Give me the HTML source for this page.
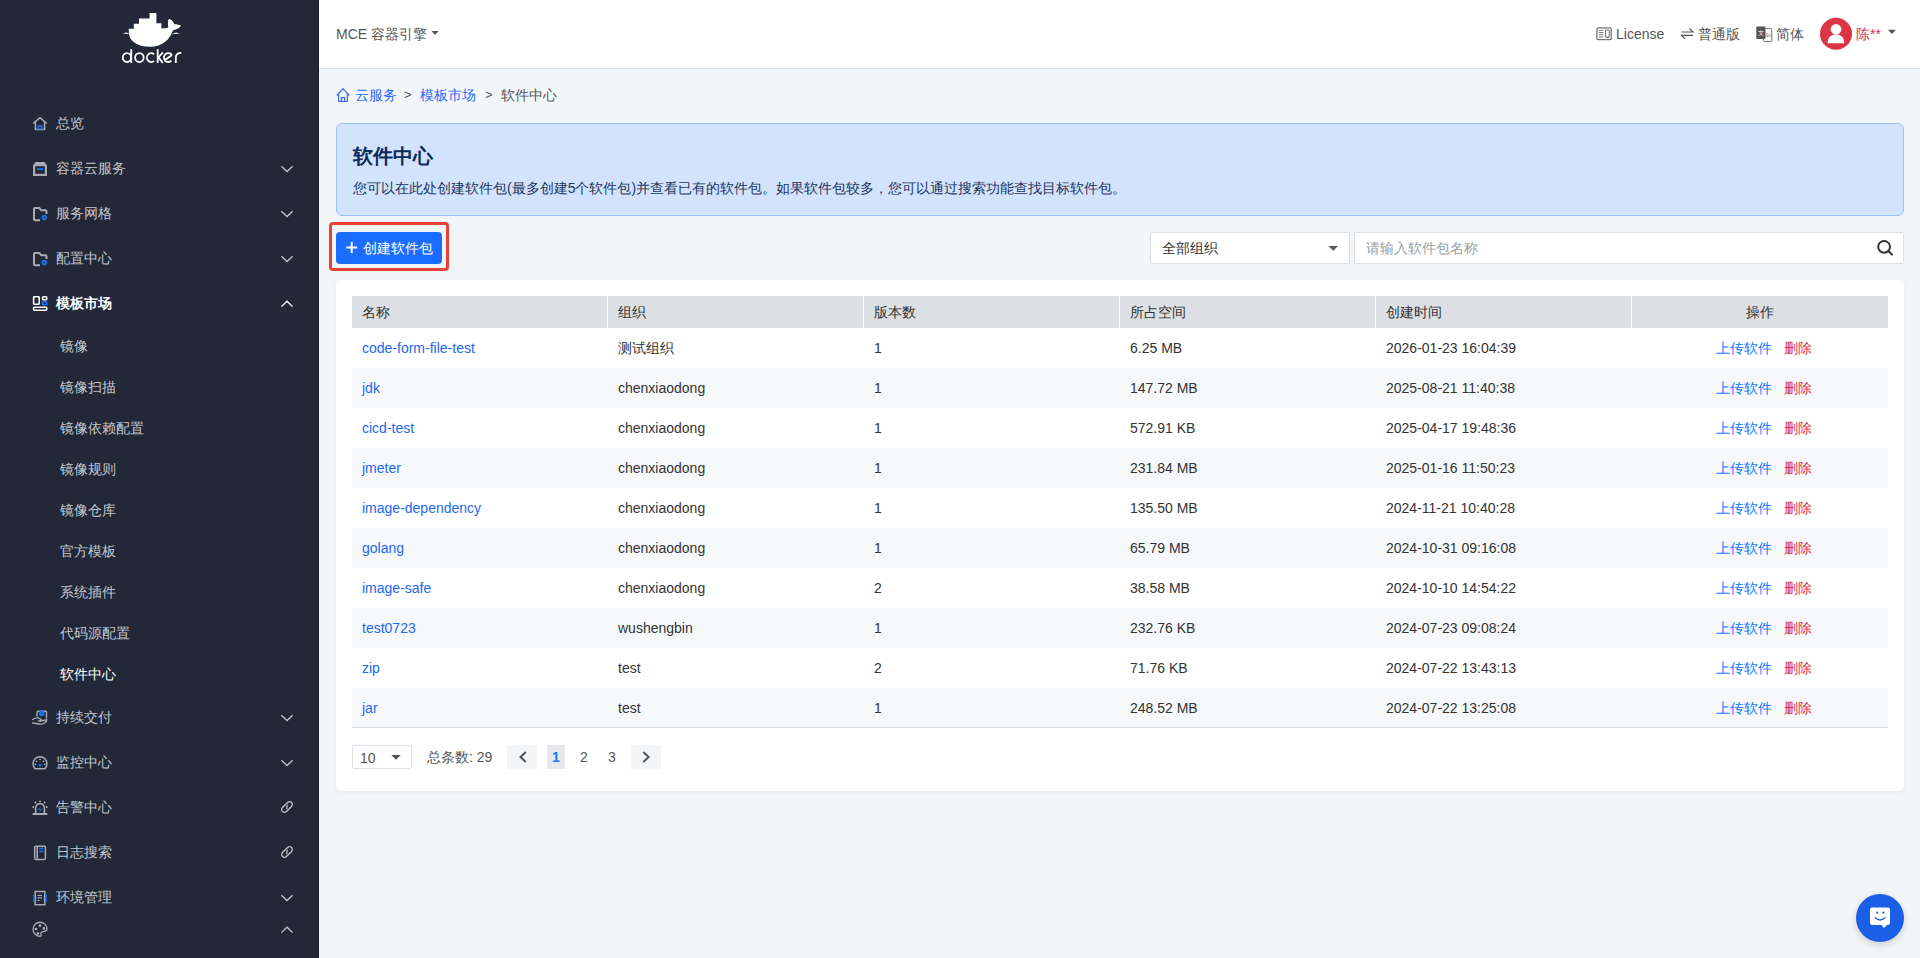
<!DOCTYPE html>
<html><head><meta charset="utf-8">
<style>
*{box-sizing:border-box;margin:0;padding:0}
html,body{width:1920px;height:958px;overflow:hidden;font-family:"Liberation Sans",sans-serif;font-size:14px;color:#333;background:#f3f6f9;position:relative}
.abs{position:absolute}
.side{position:absolute;left:0;top:0;width:319px;height:958px;background:#222837;border-right:1px solid #181c29}
.sv{position:absolute;left:0;top:0}
.t{position:absolute;height:20px;line-height:20px;color:#c3c6cd;white-space:nowrap}
.t.act{color:#fff;font-weight:bold}
.t.sact{color:#fff;font-weight:500}
.hdr{position:absolute;left:319px;top:0;width:1601px;height:69px;background:#fff;border-bottom:1px solid #dde1e6}
.ht{position:absolute;top:24px;height:20px;line-height:20px;color:#555;white-space:nowrap}
.bc{position:absolute;top:85px;height:20px;line-height:20px;white-space:nowrap}
.info{position:absolute;left:336px;top:123px;width:1568px;height:93px;background:#d2e3fd;border:1px solid #9cc3fa;border-radius:6px}
.redbox{position:absolute;left:329px;top:222px;width:120px;height:49px;border:3px solid #ec4137;border-radius:4px}
.btn{position:absolute;left:336px;top:232px;width:106px;height:32px;background:#1a6dff;border-radius:4px;color:#fff}
.sel{position:absolute;left:1150px;top:232px;width:200px;height:32px;background:#fff;border:1px solid #dcdfe6;border-radius:2px}
.srch{position:absolute;left:1354px;top:232px;width:550px;height:32px;background:#fff;border:1px solid #dcdfe6;border-radius:2px}
.card{position:absolute;left:336px;top:280px;width:1568px;height:511px;background:#fff;border-radius:6px;box-shadow:0 1px 4px rgba(0,20,60,.06)}
table{position:absolute;left:16px;top:16px;width:1536px;border-collapse:separate;border-spacing:0;table-layout:fixed}
th{height:32px;background:#dcdfe3;font-weight:normal;text-align:left;padding:0 10px;color:#333;border-right:1px solid #fff;line-height:20px}
th:last-child{border-right:0;text-align:center}
td{height:40px;padding:0 10px;color:#333;line-height:20px;white-space:nowrap}
tr.alt td{background:#f6f8fa}
td a{color:#2468f2;text-decoration:none}
td.op{padding-left:84px}
.up{color:#1677ff}
.del{color:#dc2f45;margin-left:12px}
tbody tr:last-child td{border-bottom:1px solid #dcdfe3}
.pg{position:absolute;height:20px;line-height:20px;white-space:nowrap;color:#555}
</style></head><body>
<div class="side">
<div class="t" style="left:56px;top:113px">总览</div>
<div class="t" style="left:56px;top:158px">容器云服务</div>
<div class="t" style="left:56px;top:203px">服务网格</div>
<div class="t" style="left:56px;top:248px">配置中心</div>
<div class="t act" style="left:56px;top:293px">模板市场</div>
<div class="t" style="left:56px;top:707px">持续交付</div>
<div class="t" style="left:56px;top:752px">监控中心</div>
<div class="t" style="left:56px;top:797px">告警中心</div>
<div class="t" style="left:56px;top:842px">日志搜索</div>
<div class="t" style="left:56px;top:887px">环境管理</div>
<div class="t" style="left:60px;top:336px">镜像</div>
<div class="t" style="left:60px;top:377px">镜像扫描</div>
<div class="t" style="left:60px;top:418px">镜像依赖配置</div>
<div class="t" style="left:60px;top:459px">镜像规则</div>
<div class="t" style="left:60px;top:500px">镜像仓库</div>
<div class="t" style="left:60px;top:541px">官方模板</div>
<div class="t" style="left:60px;top:582px">系统插件</div>
<div class="t" style="left:60px;top:623px">代码源配置</div>
<div class="t sact" style="left:60px;top:664px">软件中心</div>
<svg class="sv" width="319" height="958" viewBox="0 0 319 958">
<polyline points="281.4,166.25 287,171.5 292.6,166.25" fill="none" stroke="#c3c6cd" stroke-width="1.3"/>
<polyline points="281.4,211.25 287,216.5 292.6,211.25" fill="none" stroke="#c3c6cd" stroke-width="1.3"/>
<polyline points="281.4,256.25 287,261.5 292.6,256.25" fill="none" stroke="#c3c6cd" stroke-width="1.3"/>
<polyline points="281.4,306.6 287,301.25 292.6,306.6" fill="none" stroke="#ffffff" stroke-width="1.3"/>
<polyline points="281.4,715.25 287,720.5 292.6,715.25" fill="none" stroke="#c3c6cd" stroke-width="1.3"/>
<polyline points="281.4,760.25 287,765.5 292.6,760.25" fill="none" stroke="#c3c6cd" stroke-width="1.3"/>
<g transform="translate(287,807) rotate(-45)" fill="none" stroke="#b9bcc3" stroke-width="1.3" stroke-linecap="round"><path d="M-2.2,-2.8 H3.6 A2.8,2.8 0 0 1 3.6,2.8 H1.6"/><path d="M2.2,2.8 H-3.6 A2.8,2.8 0 0 1 -3.6,-2.8 H-1.6"/><path d="M-1.4,1.1 L1.4,-1.1"/></g>
<g transform="translate(287,852) rotate(-45)" fill="none" stroke="#b9bcc3" stroke-width="1.3" stroke-linecap="round"><path d="M-2.2,-2.8 H3.6 A2.8,2.8 0 0 1 3.6,2.8 H1.6"/><path d="M2.2,2.8 H-3.6 A2.8,2.8 0 0 1 -3.6,-2.8 H-1.6"/><path d="M-1.4,1.1 L1.4,-1.1"/></g>
<polyline points="281.4,895.25 287,900.5 292.6,895.25" fill="none" stroke="#c3c6cd" stroke-width="1.3"/>
<polyline points="281.4,932.6 287,927.25 292.6,932.6" fill="none" stroke="#c3c6cd" stroke-width="1.3"/>
</svg>

<svg class="sv" width="319" height="958" viewBox="0 0 319 958">
<!-- docker logo -->
<g fill="#fff">
<path d="M149.6,13 H156.4 V23.3 H161.4 V28.6 Q165,28.6 168.3,27.6 C168,25 167.9,22 168.2,20.2 Q168.8,18.2 170.6,19.4 C172.6,20.8 173.8,22.5 174.3,24.3 C176.5,24.2 179.2,24.8 181,25.6 C179.8,28 176.5,29.6 173,30.2 C170.5,38.5 162.5,46.8 150,46.8 C136.5,46.8 128.8,40.5 128.8,32 V28.8 H133.8 V23.8 H139 V18.5 H149.6 Z"/>
<path d="M122.5,33.6 L126,32.4 L128.8,33.2 L128.8,34.1 Z M172,34.1 L176,32.6 L180,33.6 L172,34.2 Z"/>
</g>
<g fill="none" stroke="#fff" stroke-width="1.8">
<ellipse cx="127" cy="57.6" rx="4.2" ry="4.45"/><line x1="131.25" y1="49.2" x2="131.25" y2="62.9"/>
<ellipse cx="139.4" cy="57.6" rx="4.3" ry="4.45"/>
<path d="M154.1,54.3 A4.3,4.45 0 1 0 154.1,60.9"/>
<line x1="157.7" y1="49.2" x2="157.7" y2="62.9"/><path d="M162.9,52.4 L158.4,57.4 L162.9,62.8"/>
<path d="M171.9,55.2 A4.3,4.45 0 1 0 171.4,60.6 M164.6,60.3 L172,54.9"/>
<path d="M175.8,62.9 V57.6 Q175.8,52.9 181.3,52.9"/>
</g>
<!-- home -->
<g fill="none" stroke="#a7abb3" stroke-width="1.5" stroke-linejoin="round">
<polyline points="33.2,123.5 40,117.6 46.8,123.5"/>
<path d="M35.4,122 V129.6 H44.6 V122"/>
</g>
<path d="M38.3,130 V126 H41.7 V130" fill="none" stroke="#1677ff" stroke-width="1.5"/>
<!-- box -->
<path d="M33,165.5 L35.5,162 H44.5 L47,165.5 V176 H33 Z" fill="#a7abb3"/>
<rect x="35.2" y="166.2" width="9.6" height="7.6" fill="#222837"/>
<rect x="37" y="168.2" width="6" height="1.8" fill="#1677ff"/>
<!-- folder x2 -->
<g>
<path d="M40,220.2 H35 Q34,220.2 34,219.2 V209 Q34,208 35,208 H39.3 L41.3,210.3 H45.5 Q46.5,210.3 46.5,211.3 V214" fill="none" stroke="#a7abb3" stroke-width="2" stroke-linejoin="round"/>
<polygon points="47.50,217.60 46.47,218.85 45.90,220.37 44.30,220.10 42.70,220.37 42.13,218.85 41.10,217.60 42.13,216.35 42.70,214.83 44.30,215.10 45.90,214.83 46.47,216.35" fill="#1677ff"/><ellipse cx="44.3" cy="217.6" rx="1.1" ry="0.8" fill="#222837"/>
</g>
<g transform="translate(0,45)">
<path d="M40,220.2 H35 Q34,220.2 34,219.2 V209 Q34,208 35,208 H39.3 L41.3,210.3 H45.5 Q46.5,210.3 46.5,211.3 V214" fill="none" stroke="#a7abb3" stroke-width="2" stroke-linejoin="round"/>
<polygon points="47.50,217.60 46.47,218.85 45.90,220.37 44.30,220.10 42.70,220.37 42.13,218.85 41.10,217.60 42.13,216.35 42.70,214.83 44.30,215.10 45.90,214.83 46.47,216.35" fill="#1677ff"/><ellipse cx="44.3" cy="217.6" rx="1.1" ry="0.8" fill="#222837"/>
</g>

<!-- template market (white active) -->
<g fill="none" stroke-width="1.6">
<rect x="33.6" y="296.8" width="5.6" height="7.4" rx="0.6" stroke="#fff"/>
<rect x="42.6" y="296.8" width="4.1" height="3" rx="0.8" stroke="#fff"/>
<rect x="42.3" y="301.8" width="4.6" height="3" rx="1" stroke="#1677ff"/>
<rect x="33.6" y="307.3" width="13.1" height="2.9" rx="0.6" stroke="#fff"/>
</g>
<!-- delivery (hand+box) -->
<g fill="none" stroke="#a7abb3" stroke-width="1.4" stroke-linecap="round" stroke-linejoin="round">
<path d="M37,716 V712.5 Q37,711.2 38.3,711.2 H45.5 Q46.5,711.2 46.5,712.2 V718"/>
<path d="M32.8,719.5 Q35,717.5 38.5,718 L41,719.3 Q42,720.6 40.5,721 H38.5"/>
<path d="M40.5,721 L44.5,720.2 L46.8,719.8 Q47,721.5 44.5,723 Q42,724.5 39,724 L32.8,723"/>
</g>
<rect x="39.2" y="711" width="5" height="5" rx="1.2" fill="#1677ff"/>
<rect x="41" y="712.8" width="1.4" height="1" fill="#222837"/>
<!-- gauge -->
<path d="M35,768.7 C33.6,767.4 33.1,765.6 33.1,763.6 A6.9,6.9 0 0 1 46.9,763.6 C46.9,765.6 46.4,767.4 45,768.7 Z" fill="none" stroke="#a7abb3" stroke-width="1.5" stroke-linejoin="round"/>
<g fill="#b4b7be"><circle cx="35.4" cy="764.3" r="0.8"/><circle cx="36.5" cy="761.3" r="0.8"/><circle cx="40" cy="759.5" r="0.8"/><circle cx="43.5" cy="761.3" r="0.8"/><circle cx="44.6" cy="764.3" r="0.8"/></g>
<rect x="38.8" y="763.9" width="2.4" height="2.4" rx="0.5" fill="#1677ff"/>
<!-- alarm -->
<path d="M35.6,813.2 V808 A4.4,4.4 0 0 1 44.4,808 V813.2" fill="none" stroke="#a7abb3" stroke-width="1.6"/>
<rect x="32.6" y="813" width="14.8" height="2.1" rx="0.6" fill="#a7abb3"/>
<g fill="#b4b7be"><circle cx="35.5" cy="802.5" r="0.9"/><circle cx="40" cy="801.3" r="0.9"/><circle cx="44.5" cy="802.5" r="0.9"/><circle cx="33.3" cy="807" r="0.9"/><circle cx="46.7" cy="807" r="0.9"/></g>
<path d="M40.8,806.8 L38.2,809.8 H40.3 L39.3,812.3 L42,809.2 H39.9 Z" fill="#1677ff"/>
<!-- book -->
<rect x="34.7" y="846.2" width="10.7" height="13.3" rx="1" fill="none" stroke="#a7abb3" stroke-width="1.5"/>
<rect x="35.4" y="847" width="1.6" height="11.8" fill="#5d6270"/>
<line x1="37.4" y1="846.2" x2="37.4" y2="859.5" stroke="#a7abb3" stroke-width="1.2"/>
<rect x="39.3" y="847.8" width="3.8" height="1.6" fill="#1677ff"/>
<rect x="39.3" y="850.8" width="4.2" height="1.4" fill="#1677ff"/>
<!-- env scroll -->
<path d="M35,891.5 H45 Q44,898 45,904.8 H35 Q36,898 35,891.5 Z" fill="none" stroke="#a7abb3" stroke-width="1.5" stroke-linejoin="round"/>
<g stroke="#a7abb3" stroke-width="1.2"><line x1="37.5" y1="895.5" x2="42" y2="895.5"/><line x1="37.5" y1="897.9" x2="42" y2="897.9"/><line x1="37.5" y1="900.5" x2="39.5" y2="900.5"/></g>
<path d="M33.5,894.5 Q34.8,898 33.5,901.8" fill="none" stroke="#1677ff" stroke-width="1.4"/>
<path d="M46.5,894.5 Q45.2,898 46.5,901.8" fill="none" stroke="#1677ff" stroke-width="1.4"/>
<!-- palette -->
<path d="M47,930 A7,7 0 1 0 40.8,936.2 Q41.2,935.6 41,934 Q40.8,932 43,931.6 Q45.5,931.4 47,930 Z" fill="none" stroke="#a7abb3" stroke-width="1.3" stroke-linejoin="round"/>
<g fill="#b4b7be"><ellipse cx="36" cy="929" rx="1.3" ry="1.3"/><ellipse cx="40" cy="925.6" rx="1.3" ry="1.3"/><ellipse cx="43.9" cy="928.4" rx="1.3" ry="1.3"/><ellipse cx="37.9" cy="933.5" rx="1.3" ry="1.3"/></g>
</svg>

</div>
<div class="hdr">
  <div class="ht" style="left:17px">MCE 容器引擎</div>
  <div class="ht" style="left:1297px">License</div>
  <div class="ht" style="left:1379px">普通版</div>
  <div class="ht" style="left:1457px">简体</div>
  <div class="ht" style="left:1537px;color:#d9304a">陈**</div>
  <svg class="abs" style="left:0;top:0" width="1601" height="68" viewBox="319 0 1601 68">
    <path d="M431.3,30.9 H438.8 L435,34.7 Z" fill="#555"/>
    <rect x="1596.9" y="27.8" width="14.3" height="11.9" rx="1.2" fill="none" stroke="#777" stroke-width="1.3"/>
    <g stroke="#777" stroke-width="1"><line x1="1598.8" y1="30.3" x2="1603.3" y2="30.3"/><line x1="1598.8" y1="32.5" x2="1603.3" y2="32.5"/><line x1="1598.8" y1="34.7" x2="1603.3" y2="34.7"/><line x1="1598.8" y1="36.9" x2="1603.3" y2="36.9"/></g>
    <rect x="1605.6" y="30" width="3.6" height="7.4" rx="0.8" fill="none" stroke="#777" stroke-width="1.1"/>
    <g fill="none" stroke="#555" stroke-width="1.2"><path d="M1681.5,32 H1693 L1689.5,28.5"/><path d="M1693,35.3 H1681.5 L1685,38.8"/></g>
    <rect x="1756.3" y="26.5" width="9.2" height="12.5" rx="1" fill="#555"/>
    <path d="M1765.6,28.6 H1771 Q1771.8,28.6 1771.8,29.4 V40.7 Q1771.8,41.5 1771,41.5 H1764.2 Q1763.4,41.5 1763.4,40.7 V39" fill="none" stroke="#777" stroke-width="1"/>
    <text x="1758.2" y="35.2" font-size="5.5" fill="#fff" font-family="Liberation Sans">文</text>
    <text x="1766" y="37" font-size="4.5" fill="#777" font-family="Liberation Sans">En</text>
    <circle cx="1836" cy="33.8" r="16" fill="#dc3545"/>
    <circle cx="1836" cy="29.3" r="5.4" fill="#fff"/>
    <path d="M1827.5,43.2 Q1827.5,34.6 1836,34.6 Q1844.3,34.6 1844.3,43.2 Z" fill="#fff"/>
    <path d="M1888,29.8 H1895.8 L1891.9,34 Z" fill="#555"/>
  </svg>
</div>
<!-- breadcrumb -->
<svg class="abs" style="left:0;top:0" width="600" height="120" viewBox="0 0 600 120">
  <path d="M336.8,95.5 L343,88.6 L349.2,95.5 M338.6,93.8 V101.3 H347.4 V93.8 M341.4,101.3 V97.6 H344.6 V101.3" fill="none" stroke="#3b6cf8" stroke-width="1.2" stroke-linejoin="round"/>
</svg>
<div class="bc" style="left:355px;color:#1f6bff">云服务</div>
<div class="bc" style="left:404px;color:#555;font-size:13px">&gt;</div>
<div class="bc" style="left:420px;color:#1f6bff">模板市场</div>
<div class="bc" style="left:485px;color:#555;font-size:13px">&gt;</div>
<div class="bc" style="left:501px;color:#555">软件中心</div>
<div class="info">
  <div class="abs" style="left:16px;top:20px;font-size:20px;font-weight:bold;color:#0c2a5a;line-height:24px;white-space:nowrap">软件中心</div>
  <div class="abs" style="left:16px;top:54px;font-size:14px;color:#1d365f;line-height:20px;white-space:nowrap">您可以在此处创建软件包(最多创建5个软件包)并查看已有的软件包。如果软件包较多，您可以通过搜索功能查找目标软件包。</div>
</div>
<div class="redbox"></div>
<div class="btn">
  <svg class="abs" style="left:0;top:0" width="106" height="32" viewBox="336 232 106 32"><path d="M351.7,242 V253 M346.3,247.5 H357.1" stroke="#fff" stroke-width="2"/></svg>
  <div class="abs" style="left:27px;top:6px;line-height:20px;white-space:nowrap">创建软件包</div>
</div>
<div class="sel">
  <div class="abs" style="left:11px;top:5px;line-height:20px;color:#333">全部组织</div>
  <svg class="abs" style="left:0;top:0" width="200" height="32" viewBox="1151 233 200 32"><path d="M1328.5,246 H1338 L1333.25,250.8 Z" fill="#555"/></svg>
</div>
<div class="srch">
  <div class="abs" style="left:11px;top:5px;line-height:20px;color:#9b9ea4">请输入软件包名称</div>
  <svg class="abs" style="left:0;top:0" width="550" height="32" viewBox="1355 233 550 32"><circle cx="1884.1" cy="246.8" r="5.9" fill="none" stroke="#333" stroke-width="2"/><path d="M1888.3,251 L1892,254.6" stroke="#333" stroke-width="2.1" stroke-linecap="round"/></svg>
</div>
<div class="card">
<table>
<colgroup><col style="width:256px"><col style="width:256px"><col style="width:256px"><col style="width:256px"><col style="width:256px"><col style="width:256px"></colgroup>
<thead><tr><th>名称</th><th>组织</th><th>版本数</th><th>所占空间</th><th>创建时间</th><th>操作</th></tr></thead>
<tbody>
<tr><td><a>code-form-file-test</a></td><td>测试组织</td><td>1</td><td>6.25 MB</td><td>2026-01-23 16:04:39</td><td class="op"><span class="up">上传软件</span><span class="del">删除</span></td></tr>
<tr class="alt"><td><a>jdk</a></td><td>chenxiaodong</td><td>1</td><td>147.72 MB</td><td>2025-08-21 11:40:38</td><td class="op"><span class="up">上传软件</span><span class="del">删除</span></td></tr>
<tr><td><a>cicd-test</a></td><td>chenxiaodong</td><td>1</td><td>572.91 KB</td><td>2025-04-17 19:48:36</td><td class="op"><span class="up">上传软件</span><span class="del">删除</span></td></tr>
<tr class="alt"><td><a>jmeter</a></td><td>chenxiaodong</td><td>1</td><td>231.84 MB</td><td>2025-01-16 11:50:23</td><td class="op"><span class="up">上传软件</span><span class="del">删除</span></td></tr>
<tr><td><a>image-dependency</a></td><td>chenxiaodong</td><td>1</td><td>135.50 MB</td><td>2024-11-21 10:40:28</td><td class="op"><span class="up">上传软件</span><span class="del">删除</span></td></tr>
<tr class="alt"><td><a>golang</a></td><td>chenxiaodong</td><td>1</td><td>65.79 MB</td><td>2024-10-31 09:16:08</td><td class="op"><span class="up">上传软件</span><span class="del">删除</span></td></tr>
<tr><td><a>image-safe</a></td><td>chenxiaodong</td><td>2</td><td>38.58 MB</td><td>2024-10-10 14:54:22</td><td class="op"><span class="up">上传软件</span><span class="del">删除</span></td></tr>
<tr class="alt"><td><a>test0723</a></td><td>wushengbin</td><td>1</td><td>232.76 KB</td><td>2024-07-23 09:08:24</td><td class="op"><span class="up">上传软件</span><span class="del">删除</span></td></tr>
<tr><td><a>zip</a></td><td>test</td><td>2</td><td>71.76 KB</td><td>2024-07-22 13:43:13</td><td class="op"><span class="up">上传软件</span><span class="del">删除</span></td></tr>
<tr class="alt"><td><a>jar</a></td><td>test</td><td>1</td><td>248.52 MB</td><td>2024-07-22 13:25:08</td><td class="op"><span class="up">上传软件</span><span class="del">删除</span></td></tr>
</tbody>
</table>
</div>
<!-- pagination -->
<div class="abs" style="left:352px;top:745px;width:60px;height:24px;border:1px solid #dcdfe6;border-radius:2px;background:#fff"></div>
<div class="pg" style="left:360px;top:748px;color:#555">10</div>
<div class="pg" style="left:427px;top:747px">总条数: 29</div>
<div class="abs" style="left:507px;top:745px;width:30px;height:24px;background:#f4f5f7"></div>
<div class="abs" style="left:547px;top:745px;width:18px;height:24px;background:#e6e8ec"></div>
<div class="abs" style="left:631px;top:745px;width:30px;height:24px;background:#f4f5f7"></div>
<div class="pg" style="left:552px;top:747px;color:#1677ff;font-weight:bold">1</div>
<div class="pg" style="left:580px;top:747px">2</div>
<div class="pg" style="left:608px;top:747px">3</div>
<svg class="abs" style="left:0;top:0" width="700" height="800" viewBox="0 0 700 800">
  <path d="M391.3,755 H400.8 L396,759.8 Z" fill="#555"/>
  <polyline points="525.8,752 520.5,757 525.8,762" fill="none" stroke="#555" stroke-width="2"/>
  <polyline points="643.3,752 648.6,757 643.3,762" fill="none" stroke="#555" stroke-width="2"/>
</svg>
<!-- chat -->
<div class="abs" style="left:1856px;top:893.7px;width:48px;height:48px;border-radius:50%;background:#1a5fe6;box-shadow:0 3px 8px rgba(0,0,0,.15)"></div>
<svg class="abs" style="left:1850px;top:890px" width="60" height="60" viewBox="1850 890 60 60">
  <path d="M1872,907.5 H1888 Q1890,907.5 1890,909.5 V923 Q1890,925 1888,925 H1887 L1884,928 L1881.5,925 H1872 Q1870,925 1870,923 V909.5 Q1870,907.5 1872,907.5 Z" fill="#fff"/>
  <circle cx="1877.3" cy="912.7" r="1.1" fill="#1a5fe6"/><circle cx="1883.4" cy="912.7" r="1.1" fill="#1a5fe6"/>
  <path d="M1875.3,917.8 Q1880,922.3 1885,917.8" fill="none" stroke="#1a5fe6" stroke-width="1.3" stroke-linecap="round"/>
</svg>
</body></html>
